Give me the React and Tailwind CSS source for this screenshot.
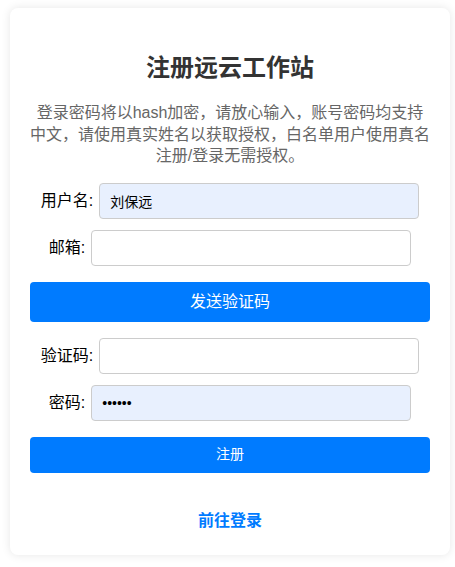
const font = { fontFamily: '"Liberation Sans", "Noto Sans CJK SC", sans-serif' };

const Field = ({ label, value, type = 'text', filled }) => (
    <div className="flex items-center justify-center">
        <label className="text-[16px] text-black mr-[6px]">{label}:</label>
        <input
            type={type}
            defaultValue={value}
            className={`w-[320px] h-[36px] border border-[#ccc] rounded-[4px] px-[10px] text-[14px] text-black outline-none ${filled ? 'bg-[#e8f0fe]' : 'bg-white'}`}
        />
    </div>
);

const App = () => {
    return (
        <div className="min-h-[567px] bg-white pt-[8px] pl-[10px] pr-[5px]" style={font}>
            <div className="bg-white rounded-[8px] shadow-[0_0_10px_rgba(0,0,0,0.1)] px-[20px] pt-[42px] pb-[22px]">
                <h1 className="text-center text-[24px] font-bold text-[#333] leading-[36px]">注册远云工作站</h1>
                <p className="text-center text-[16px] text-[#666] leading-[21.5px] mt-[16px]">
                    登录密码将以hash加密，请放心输入，账号密码均支持中文，请使用真实姓名以获取授权，白名单用户使用真名注册/登录无需授权。
                </p>

                <div className="mt-[16px] flex flex-col">
                    <Field label="用户名" value="刘保远" filled />
                    <div className="mt-[11px]"><Field label="邮箱" value="" /></div>
                    <button className="mt-[16px] h-[40px] w-full bg-[#007bff] text-white text-[16px] rounded-[4px]">发送验证码</button>
                    <div className="mt-[16px]"><Field label="验证码" value="" /></div>
                    <div className="mt-[11px]"><Field label="密码" value="123456" type="password" filled /></div>
                    <button className="mt-[16px] h-[36px] w-full bg-[#007bff] text-white text-[14px] rounded-[4px]">注册</button>
                </div>

                <div className="mt-[36px] text-center">
                    <a href="#" className="text-[16px] font-bold text-[#007bff]">前往登录</a>
                </div>
            </div>
        </div>
    );
};

export default App;
